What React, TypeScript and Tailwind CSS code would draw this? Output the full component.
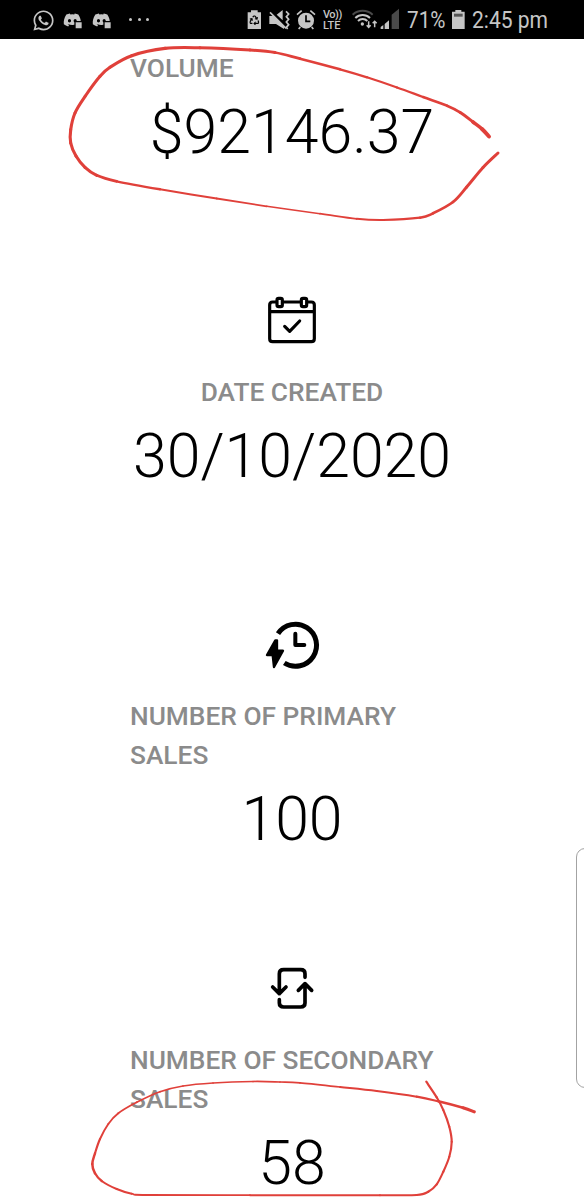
import React from 'react';
import { FaDiscord, FaRecycle, FaWhatsapp } from 'react-icons/fa';

type InkPoint = [x: number, y: number, width: number];

interface StatProps {
  label: string;
  value: string;
  icon?: React.ReactNode;
  alignLeft?: boolean;
  className?: string;
}

const volumeInk: InkPoint[] = [
  [489, 136.5, 4], [482, 129, 4], [473, 122, 3.2], [460, 112.3, 2.8], [447, 105.7, 2.6], [423, 97, 2.4],
  [397, 87.5, 2.2], [367, 77.3, 2.2], [340, 69.3, 2.4], [300, 58.7, 2.6], [275, 52.5, 2.9], [250, 50, 3],
  [200, 47.8, 3.1], [165, 48.4, 3.1], [131.7, 55.7, 3.1], [110, 67.3, 3.1], [100, 76.3, 3.1], [85, 96.5, 3.1],
  [75, 113, 3.1], [70.7, 129.7, 3.1], [70.7, 143, 3.1], [76, 156, 3.1], [85, 167.3, 3.1], [96.7, 175.3, 3.1],
  [116.7, 181.3, 2.6], [160, 189.3, 2.2], [216.7, 198.5, 1.9], [266.7, 206.3, 1.7], [320, 213.7, 1.6],
  [356.7, 218.8, 1.8], [383, 220, 2], [420, 217.7, 2.4], [433, 213.3, 2.6], [453, 202, 2.8],
  [466.7, 187, 2.9], [483, 167.5, 2.9], [498, 153, 3.1],
];

const salesInk: InkPoint[] = [
  [474.3, 1111.8, 3.4], [463, 1107.8, 2.9], [438.3, 1101.3, 2.3], [416.7, 1096.7, 2.1], [376.7, 1091, 1.9],
  [340, 1087, 1.8], [300, 1082.9, 1.7], [280, 1082, 1.7], [253, 1081.5, 1.7], [213, 1083, 1.7], [183, 1086, 1.7],
  [160, 1091.7, 1.7], [136.7, 1102.3, 1.7], [118.3, 1113.3, 1.9], [108.3, 1124, 1.9], [100, 1139, 2],
  [95, 1153.3, 2.3], [92.3, 1164, 2.6], [95, 1173.3, 2.4], [101.7, 1181, 2.2], [116.7, 1189, 2.1],
  [131.7, 1193.7, 1.9], [146.7, 1195, 1.8], [250, 1195.2, 1.8], [380, 1195.2, 1.9], [416.7, 1195, 2.3],
  [428.3, 1191.7, 2.1], [436.7, 1184.3, 2.1], [443.3, 1171.7, 2.1], [449.3, 1156.7, 2.1], [451.7, 1141.7, 2.2],
  [449.3, 1126.7, 2.1], [443.3, 1110, 2.1], [436.7, 1097.3, 2.1], [426.3, 1081.7, 2.4],
];

// Smooth curve through the points, with the pen width changing along the way
function InkStroke({ points }: { points: InkPoint[] }) {
  return (
    <g fill="none" stroke="#e0403a" strokeLinecap="round">
      {points.slice(0, -1).map((p1, i) => {
        const p0 = points[i - 1] ?? p1;
        const p2 = points[i + 1];
        const p3 = points[i + 2] ?? p2;
        const c1 = [p1[0] + (p2[0] - p0[0]) / 6, p1[1] + (p2[1] - p0[1]) / 6];
        const c2 = [p2[0] - (p3[0] - p1[0]) / 6, p2[1] - (p3[1] - p1[1]) / 6];
        return (
          <path
            key={i}
            d={`M${p1[0]} ${p1[1]}C${c1.join(' ')} ${c2.join(' ')} ${p2[0]} ${p2[1]}`}
            strokeWidth={(p1[2] + p2[2]) / 2}
          />
        );
      })}
    </g>
  );
}

function DiscordChatIcon() {
  return (
    <svg viewBox="0 0 63 63" className="h-[21px] w-[21px] shrink-0">
      <FaDiscord x={0} y={5} size={56} />
      <path d="M36 38h22v22H40l-4 4z" fill="currentColor" stroke="#000" strokeWidth="4" />
    </svg>
  );
}

function StatusBar() {
  return (
    <header className="flex h-[39px] shrink-0 items-start bg-black pt-[9px] text-[#c6c6c6]">
      <FaWhatsapp className="ml-[32px] h-[23px] w-[23px] shrink-0" />
      <div className="ml-[8px] flex gap-[8px]">
        <DiscordChatIcon />
        <DiscordChatIcon />
      </div>
      <div className="mt-[9px] ml-[16px] flex gap-[5.5px]">
        <span className="h-[3px] w-[3px] rounded-full bg-current" />
        <span className="h-[3px] w-[3px] rounded-full bg-current" />
        <span className="h-[3px] w-[3px] rounded-full bg-current" />
      </div>

      {/* Battery saver */}
      <svg viewBox="21 27 45 63" className="ml-[98px] h-[21px] w-[15px] shrink-0">
        <path d="M33 31h20v6h10v50H23V37h10z" fill="currentColor" />
        <FaRecycle x={28} y={46} size={30} color="#000" />
      </svg>

      {/* Vibrate */}
      <svg viewBox="84 27 69 63" className="ml-[6px] h-[21px] w-[23px] shrink-0">
        <path d="M88 48h13l31 31v8L108 72H88zM110 44l18-14v31z" fill="currentColor" />
        <path d="M90 37l48 48" stroke="currentColor" strokeWidth="5" />
        <path
          d="M138 34l8 8-7 8 7 8-7 8 7 8-7 8 4 5"
          fill="none"
          stroke="currentColor"
          strokeWidth="5"
        />
      </svg>

      {/* Alarm */}
      <svg viewBox="168 27 60 63" className="ml-[5px] h-[21px] w-[20px] shrink-0">
        <circle cx="198" cy="62" r="24" fill="currentColor" />
        <path d="M171 44l14-12M211 32l14 12M181 81l-5 6M215 81l5 6" stroke="currentColor" strokeWidth="5" />
        <path d="M198 46v18h13" fill="none" stroke="#000" strokeWidth="5" />
      </svg>

      <div className="ml-[7px] flex w-[20px] shrink-0 flex-col text-[11px] leading-[11px] font-medium">
        <span className="tracking-[-0.5px]">Vo))</span>
        <span>LTE</span>
      </div>

      {/* Wifi */}
      <svg viewBox="330 27 81 63" fill="none" className="ml-[8px] h-[21px] w-[27px] shrink-0">
        <path d="M335 44a44 44 0 0 1 60 0" stroke="#4a4a4a" strokeWidth="6" />
        <path d="M343 54a32 32 0 0 1 44 0M351 63a20 20 0 0 1 28 0" stroke="currentColor" strokeWidth="6" />
        <circle cx="364" cy="72" r="5" fill="currentColor" />
        <path d="M383 64v18M377 76l6 6 6-6M401 82V64M395 70l6-6 6 6" stroke="currentColor" strokeWidth="4.5" />
      </svg>

      {/* Signal */}
      <svg viewBox="420 24 60 66" className="ml-[2px] -mt-px h-[22px] w-[20px] shrink-0">
        <path d="M422 87v-6l8-6v12zM434 87V72l13-11v26z" fill="currentColor" />
        <path d="M455 87V44l22-18v61z" fill="#4a4a4a" />
      </svg>

      <span className="ml-[7px] w-[39px] shrink-0 origin-left scale-x-[.9] text-[23px] leading-[24px]">71%</span>
      <svg viewBox="153 27 45 63" className="ml-[5px] h-[21px] w-[15px] shrink-0">
        <path d="M166 30h18v5h10v52h-38V35h10z" fill="currentColor" />
        <path d="M162 41h26v9h-26z" fill="#555" />
      </svg>
      <span className="ml-[6px] shrink-0 origin-left scale-x-[.915] text-[23px] leading-[24px] whitespace-nowrap">
        2:45 pm
      </span>
    </header>
  );
}

function CalendarIcon() {
  return (
    <svg
      viewBox="0 0 252 210"
      fill="none"
      stroke="currentColor"
      strokeWidth="9.5"
      strokeLinecap="round"
      strokeLinejoin="round"
      className="mb-px h-[70px] w-[84px]"
    >
      <path d="M78 51H68q-9 0-9 9v101q0 9 9 9h116q9 0 9-9V60q0-9-9-9h-10M100 51h50M59 80h134" />
      <rect x="81" y="40" width="16" height="25" rx="5" />
      <rect x="154" y="40" width="16" height="25" rx="5" />
      <path d="M104 124l15 15 30-31" />
    </svg>
  );
}

function FlashClockIcon() {
  return (
    <svg viewBox="0 0 252 210" fill="none" stroke="currentColor" className="h-[70px] w-[84px]">
      <path d="M84 71A63 63 0 1 1 103 159" strokeWidth="15" />
      <path d="M136 71v34h27" strokeWidth="12" strokeLinecap="round" strokeLinejoin="round" />
      <path
        d="M76 91L51 135h17l4 36 27-49H81V91z"
        fill="currentColor"
        strokeWidth="7"
        strokeLinejoin="round"
      />
    </svg>
  );
}

function SwapIcon() {
  return (
    <svg
      viewBox="0 -3 252 210"
      fill="none"
      stroke="currentColor"
      strokeWidth="11"
      strokeLinecap="round"
      strokeLinejoin="round"
      className="h-[70px] w-[84px]"
    >
      <path d="M165 67V56q0-12-13-12h-51q-13 0-13 12v60M68 96l20 20 20-20" />
      <path d="M88 134v10q0 12 13 12h51q13 0 13-12V86M145 106l20-20 20 20" />
    </svg>
  );
}

function Stat({ label, value, icon, alignLeft = false, className = '' }: StatProps) {
  return (
    <section className={`flex w-[324px] flex-col items-center ${className}`}>
      {icon && <div className="mb-[17px]">{icon}</div>}
      <h2 className={`text-[26.3px] leading-[39px] font-medium text-[#8b8b8b] ${alignLeft ? 'self-start' : ''}`}>
        {label}
      </h2>
      <p className="text-[60.8px] leading-[90px] font-light text-black">{value}</p>
    </section>
  );
}

export default function App() {
  return (
    <div className="relative flex h-[1200px] w-[584px] flex-col overflow-hidden bg-white font-['Roboto',sans-serif]">
      <StatusBar />

      <main className="ml-[130px] flex flex-col text-black">
        <Stat label="VOLUME" value="$92146.37" alignLeft className="mt-[10px]" />
        <Stat label="DATE CREATED" value="30/10/2020" icon={<CalendarIcon />} className="mt-[107px]" />
        <Stat label="NUMBER OF PRIMARY SALES" value="100" icon={<FlashClockIcon />} className="mt-[108px]" />
        <Stat label="NUMBER OF SECONDARY SALES" value="58" icon={<SwapIcon />} className="mt-[89px]" />
      </main>

      {/* Edge panel handle */}
      <div className="absolute top-[848px] -right-[10px] h-[240px] w-[18px] rounded-[9px] border border-[#a3a3a3] bg-white" />

      {/* Hand-drawn marks */}
      <svg viewBox="0 0 584 1200" className="pointer-events-none absolute inset-0 h-[1200px] w-[584px]">
        <InkStroke points={volumeInk} />
        <InkStroke points={salesInk} />
      </svg>
    </div>
  );
}
